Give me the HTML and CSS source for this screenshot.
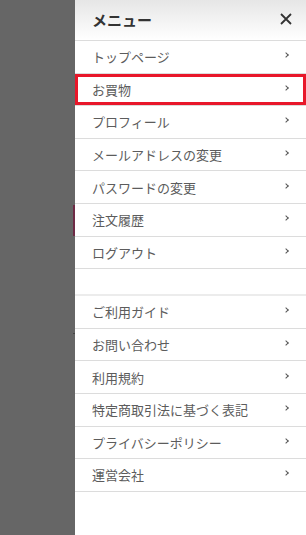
FILE: index.html
```html
<!DOCTYPE html>
<html lang="ja">
<head>
  <meta charset="UTF-8" />
  <meta name="viewport" content="width=device-width, initial-scale=1.0"/>
  <title>メニュー</title>
  <link rel="stylesheet" href="styles.css">
</head>
<body>
  <div class="overlay">
    <span class="peek peek-top"></span>
    <span class="peek peek-bottom"></span>
  </div>

  <nav class="drawer">
    <div class="drawer-head">
      <h2>メニュー</h2>
      <svg class="close" width="12" height="12" viewBox="0 0 12 12">
        <path d="M1 1 L11 11 M11 1 L1 11" stroke="#333" stroke-width="1.8" fill="none"/>
      </svg>
    </div>

    <ul class="menu">
      <li><a href="#">トップページ</a></li>
      <li class="marked"><a href="#">お買物</a></li>
      <li><a href="#">プロフィール</a></li>
      <li><a href="#">メールアドレスの変更</a></li>
      <li><a href="#">パスワードの変更</a></li>
      <li><a href="#">注文履歴</a></li>
      <li><a href="#">ログアウト</a></li>
    </ul>

    <div class="spacer"></div>

    <ul class="menu">
      <li><a href="#">ご利用ガイド</a></li>
      <li><a href="#">お問い合わせ</a></li>
      <li><a href="#">利用規約</a></li>
      <li><a href="#">特定商取引法に基づく表記</a></li>
      <li><a href="#">プライバシーポリシー</a></li>
      <li><a href="#">運営会社</a></li>
    </ul>
  </nav>
</body>
</html>
```

FILE: styles.css
```css
body {
  margin: 0;
  font-family: "Noto Sans CJK JP", "Noto Sans", sans-serif;
  display: flex;
  min-height: 100vh;
  background: #fff;
}

.overlay {
  flex: 0 0 75px;
  background: #666;
  position: relative;
}

/* bits of the page under the overlay */
.peek {
  position: absolute;
  right: 0;
  width: 2px;
}

.peek-top {
  top: 205px;
  height: 31px;
  background: #6e2a45;
}

.peek-bottom {
  top: 333px;
  height: 1px;
  background: #444;
}

.drawer {
  flex: 1;
  background: #fff;
}

.drawer-head {
  height: 41px;
  box-sizing: border-box;
  border-bottom: 1px solid #dcdcdc;
  background: linear-gradient(#e6e6e6, #fff);
  display: flex;
  align-items: center;
  justify-content: space-between;
  padding: 0 14px 2px 17px;
}

.drawer-head h2 {
  margin: 0;
  font-size: 15px;
  font-weight: bold;
  color: #333;
}

.menu {
  list-style: none;
  margin: 0;
  padding: 0;
}

.menu li {
  border-bottom: 1px solid #dcdcdc;
}

.menu a {
  display: flex;
  align-items: center;
  justify-content: space-between;
  height: 31.6px;
  padding: 0 18px 0 17px;
  font-size: 13px;
  color: #5c5c5c;
  text-decoration: none;
}

.menu a::after {
  content: "";
  width: 3px;
  height: 3px;
  border-top: 1.4px solid #555;
  border-right: 1.4px solid #555;
  transform: rotate(45deg);
  margin-top: -3px;
}

.menu li.marked a {
  outline: 3px solid #e8172a;
  outline-offset: -3px;
}

.spacer {
  height: 26px;
  border-bottom: 2px solid #ececec;
  box-sizing: border-box;
  margin-top: 1px;
}
```
